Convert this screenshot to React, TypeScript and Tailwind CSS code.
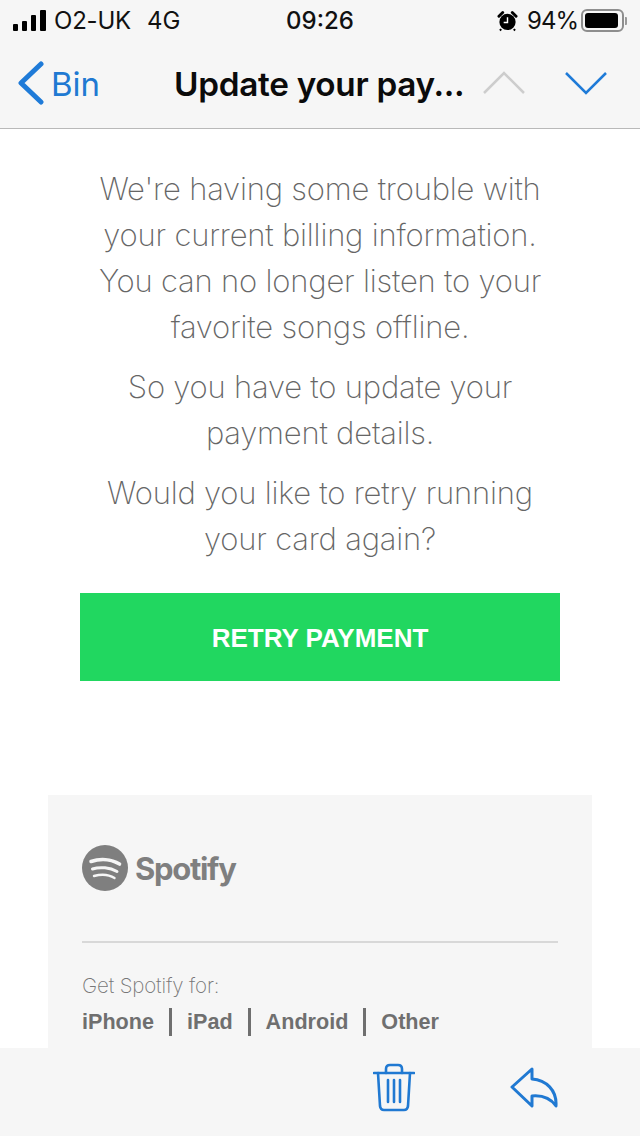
import React from "react";

const sans = "font-['Inter','Liberation_Sans',sans-serif]";
const helvetica = "font-['Liberation_Sans','Inter',sans-serif]";

function StatusBar() {
  return (
    <div className="flex h-[40px] items-center justify-between px-[13px] pt-[1px] text-[24px] leading-none text-[#111]">
      <div className="flex w-[200px] items-center">
        {/* signal bars */}
        <div className="flex items-end gap-[4px]">
          <div className="h-[7px] w-[5px] rounded-[1px] bg-black" />
          <div className="h-[10px] w-[5px] rounded-[1px] bg-black" />
          <div className="h-[16px] w-[5px] rounded-[1px] bg-black" />
          <div className="h-[21px] w-[6px] rounded-[1px] bg-black" />
        </div>
        <span className="ml-[8px] tracking-[-0.2px]">O2-UK</span>
        <span className="ml-[16px]">4G</span>
      </div>
      <span className="font-medium">09:26</span>
      <div className="flex w-[200px] items-center justify-end">
        <svg width="21" height="22" viewBox="0 0 22 22">
          <circle cx="11" cy="12" r="8.500" fill="#000" />
          <path d="M2 6 L6 2 M16 2 L20 6" stroke="#000" strokeWidth="3" strokeLinecap="round" />
          <path d="M4.500 19.500 L3 21 M17.500 19.500 L19 21" stroke="#000" strokeWidth="2" />
          <path d="M11 7 V12.500 H7" stroke="#fff" strokeWidth="1.500" fill="none" />
        </svg>
        <span className="ml-[9px] tracking-[-1px]">94%</span>
        <div className="ml-[3px] flex h-[23px] w-[43px] items-center rounded-[6px] border-2 border-[#8e8e8e] p-[2px]">
          <div className="h-full w-[33px] rounded-[3px] bg-black" />
        </div>
        <div className="ml-[1px] h-[8px] w-[2px] rounded-r-[1px] bg-[#9a9a9a]" />
      </div>
    </div>
  );
}

function NavBar() {
  return (
    <div className="flex h-[88px] items-center pb-[2px] pl-[17px] pr-[33px]">
      <svg width="28" height="44" viewBox="0 0 28 44" fill="none">
        <path d="M24 3 L4 22 L24 41" stroke="#1f7bd8" strokeWidth="5" strokeLinecap="round" strokeLinejoin="round" />
      </svg>
      <span className="ml-[6px] mt-[2px] text-[33px] leading-none text-[#2079d2]">Bin</span>
      <span className="ml-[74px] mt-[3px] text-[33.300px] font-semibold leading-none tracking-[-0.3px] text-[#0b0b0b]">Update your pay...</span>
      <svg className="ml-[19px]" width="42" height="24" viewBox="0 0 42 24" fill="none">
        <path d="M1 22 L21 2 L41 22" stroke="#cdcdcd" strokeWidth="2.500" />
      </svg>
      <svg className="ml-auto" width="42" height="24" viewBox="0 0 42 24" fill="none">
        <path d="M1 2 L21 22 L41 2" stroke="#1f7bd8" strokeWidth="2.500" />
      </svg>
    </div>
  );
}

function SpotifyMark() {
  return (
    <svg width="46" height="46" viewBox="0 0 46 46" fill="none">
      <circle cx="23" cy="23" r="23" fill="#7f7f7f" />
      <path d="M9 16.500 C18 13.500 29 14 37.500 19" stroke="#f6f6f6" strokeWidth="3.600" strokeLinecap="round" />
      <path d="M10.500 24 C18 21.500 28 22.500 35 26.500" stroke="#f6f6f6" strokeWidth="3" strokeLinecap="round" />
      <path d="M12 31 C19 29 27 29.500 32.500 33" stroke="#f6f6f6" strokeWidth="2.400" strokeLinecap="round" />
    </svg>
  );
}

function Toolbar() {
  return (
    <div className="flex h-[88px] shrink-0 items-center justify-end gap-[95px] bg-[#f6f6f6] pb-[9px] pr-[82px]">
      <svg width="42" height="50" viewBox="0 0 42 50" fill="none" stroke="#2079d2" strokeWidth="2.600" strokeLinecap="round" strokeLinejoin="round">
        <path d="M1 10 H41" />
        <path d="M13 10 V6 Q13 2 17 2 H25 Q29 2 29 6 V10" />
        <path d="M5 10 L7 43 Q7.500 47 11 47 H31 Q34.500 47 35 43 L37 10" />
        <path d="M15 17 V39 M21 17 V39 M27 17 V39" />
      </svg>
      <svg width="48" height="42" viewBox="0 0 48 42" fill="none" stroke="#2079d2" strokeWidth="3" strokeLinecap="round" strokeLinejoin="round">
        <path d="M22 2 L2 20 L22 39 V29 C33 28 41 32 46 39 C47 23 36 13 22 12 Z" />
      </svg>
    </div>
  );
}

export default function App() {
  return (
    <div className={`flex h-[1136px] w-[640px] flex-col overflow-hidden bg-white ${sans}`}>
      <div className="shrink-0 border-b border-[#b9b9b9] bg-[#f6f6f6]">
        <StatusBar />
        <NavBar />
      </div>

      <div className="min-h-0 flex-1 overflow-hidden">
        <div className="flex flex-col items-center gap-[14px] pt-[37px] text-center text-[31px] font-extralight leading-[46px] tracking-[-0.2px] text-[#666]">
          <p>
            We're having some trouble with<br />
            your current billing information.<br />
            You can no longer listen to your<br />
            favorite songs offline.
          </p>
          <p>
            So you have to update your<br />
            payment details.
          </p>
          <p>
            Would you like to retry running<br />
            your card again?
          </p>
        </div>

        <div className={`mx-[80px] mt-[31px] flex h-[88px] items-center justify-center bg-[#21d760] pt-[2px] text-[26px] font-bold text-white ${helvetica}`}>
          RETRY PAYMENT
        </div>

        <div className="mx-[48px] mt-[114px] h-[300px] bg-[#f6f6f6] px-[34px] pt-[50px]">
          <div className="flex items-center gap-[7px]">
            <SpotifyMark />
            <span className="text-[31px] font-bold leading-none tracking-[-1.300px] text-[#7f7f7f]">Spotify</span>
          </div>
          <div className="mt-[50px] h-[2px] bg-[#d8d8d8]" />
          <p className="mt-[29px] text-[20.500px] font-extralight leading-[28px] tracking-[-0.150px] text-[#777]">Get Spotify for:</p>
          <div className={`mt-[8px] flex items-center text-[21.600px] font-bold leading-[28px] text-[#6f6f6f] ${helvetica}`}>
            <span>iPhone</span>
            <div className="mx-[15px] h-[28px] w-[3px] bg-[#6f6f6f]" />
            <span>iPad</span>
            <div className="mx-[15px] h-[28px] w-[3px] bg-[#6f6f6f]" />
            <span>Android</span>
            <div className="mx-[15px] h-[28px] w-[3px] bg-[#6f6f6f]" />
            <span>Other</span>
          </div>
        </div>
      </div>

      <Toolbar />
    </div>
  );
}
